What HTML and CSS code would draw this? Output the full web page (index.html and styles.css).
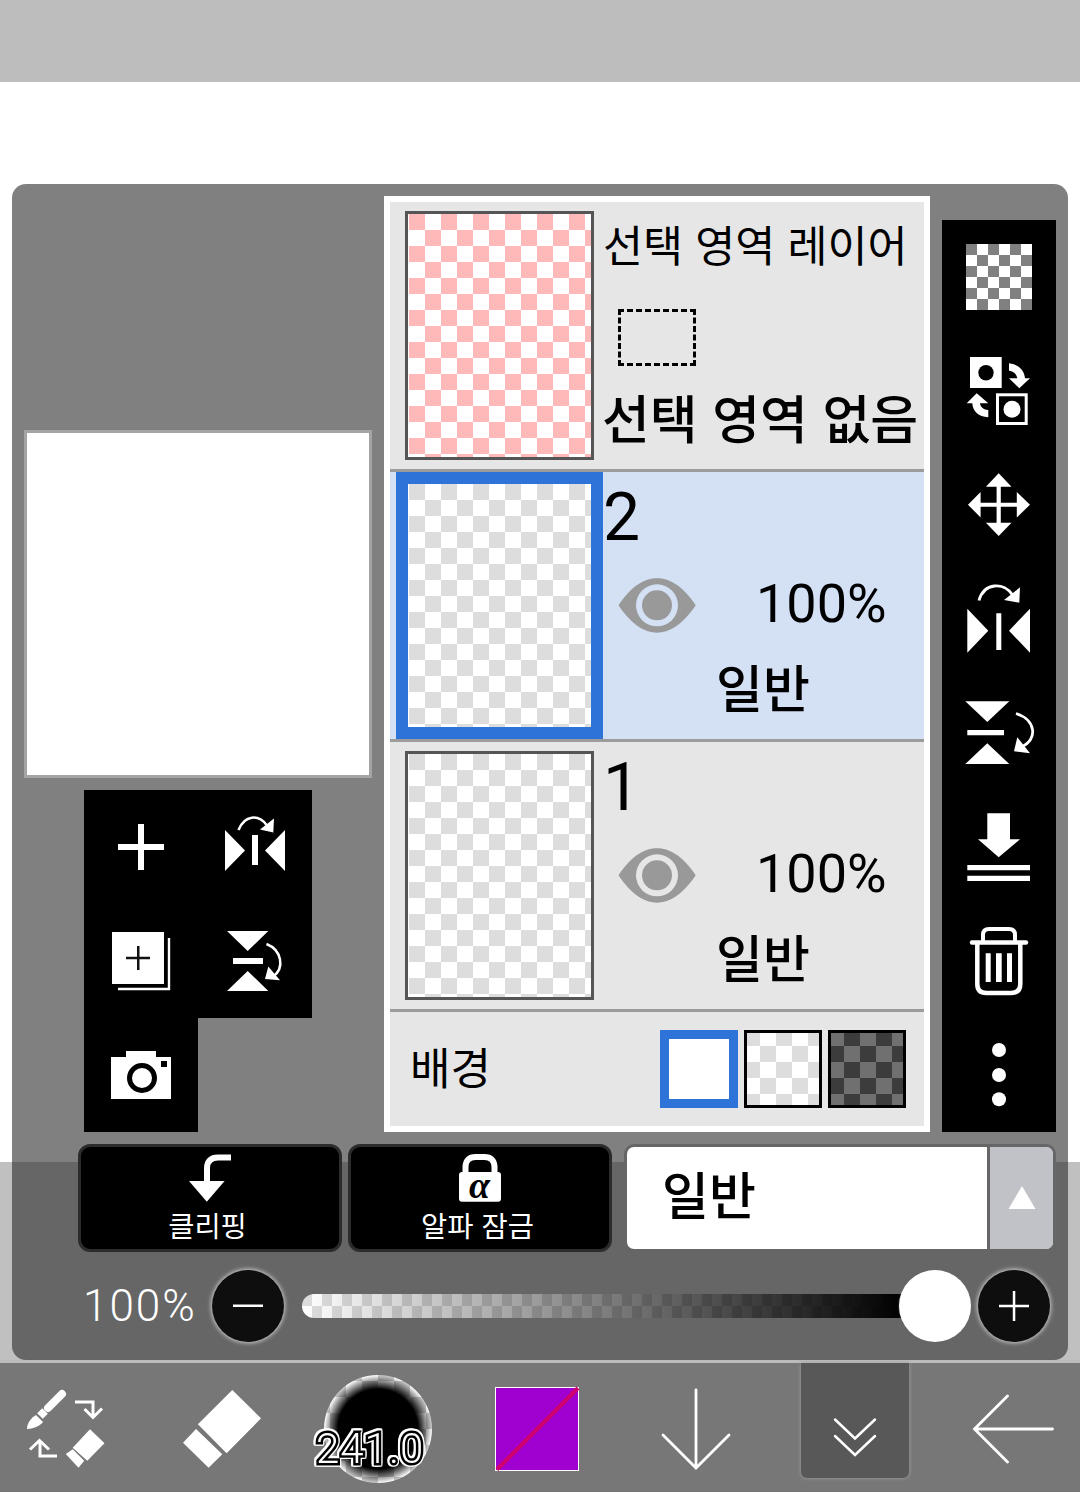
FILE: index.html
```html
<!DOCTYPE html>
<html lang="ko">
<head>
<meta charset="utf-8">
<title>레이어</title>
<link rel="stylesheet" href="styles.css">
</head>
<body>
<div class="page">
  <div class="statusbar"></div>
  <main class="stage">
    <section class="panel">
      <div class="workspace">
        <div class="left-col">
          <div class="preview"></div>
          <div class="toolbox">
            <div class="tool"><svg class="ic" viewBox="84 790 114 114"><path class="w" d="M138 824h6v20h20v6h-20v20h-6v-20h-20v-6h20z"/></svg></div>
            <div class="tool"><svg class="ic" viewBox="198 790 114 114"><path class="w" d="M225 830v41l20-20.500zM285 830v41l-20-20.500zM252 835h6v30h-6z"/><path class="s" stroke-width="2.500" d="M238.500 830c6-15 20-16 28-5"/><path class="w" d="M274 818.500l-.700 14-13.300-3z"/></svg></div>
            <div class="tool"><svg class="ic" viewBox="84 904 114 114"><path class="w" d="M112 932h52v52h-52z"/><path class="s" stroke-width="2.400" d="M118 989h51v-51"/><path fill="#111" d="M137 946h2.500v10.800H150v2.500h-10.500V970H137v-10.700h-11v-2.500h11z"/></svg></div>
            <div class="tool"><svg class="ic" viewBox="198 904 114 114"><path class="w" d="M227 931h41.300l-20.600 20zM227 991h41.300l-20.600-20zM233 958h30v6h-30z"/><path class="s" stroke-width="2.500" d="M266.500 944c15 6 19 24 6 33"/><path class="w" d="M268.300 966.500L265 979l15 1.200z"/></svg></div>
            <div class="tool"><svg class="ic" viewBox="84 1018 114 114"><path class="w" d="M126 1051h30v6h15v42h-60v-42h15z"/><circle cx="142" cy="1078" r="12.500" fill="#fff" stroke="#000" stroke-width="5"/><path fill="#000" d="M161 1061h6v6h-6z"/></svg></div>
          </div>
        </div>

        <div class="layers">
          <div class="layer">
            <div class="thumb thumb-pink"></div>
            <div class="layer-info">
              <div class="line title">선택 영역 레이어</div>
              <div class="line"><div class="dashed"></div></div>
              <div class="line line-last title-lg">선택 영역 없음</div>
            </div>
          </div>
          <div class="layer layer-active">
            <div class="thumb thumb-active"></div>
            <div class="layer-info info-active">
              <div class="line num">2</div>
              <div class="line">
                <svg class="eye" viewBox="618 578 78 55"><path class="eye-body" d="M618.500 605.300C632 585 645 578.300 657 578.300S682 585 695.700 605.300C682 625.500 669 632.700 657 632.700S632 625.500 618.500 605.300Z"/><circle class="eye-ring" cx="657" cy="605.300" r="21"/><circle class="eye-body" cx="657" cy="605.300" r="15"/></svg>
                <span class="pct">100%</span>
              </div>
              <div class="line line-last mode">일반</div>
            </div>
          </div>
          <div class="layer">
            <div class="thumb"></div>
            <div class="layer-info">
              <div class="line num num-one">1</div>
              <div class="line">
                <svg class="eye" viewBox="618 578 78 55"><path class="eye-body" d="M618.500 605.300C632 585 645 578.300 657 578.300S682 585 695.700 605.300C682 625.500 669 632.700 657 632.700S632 625.500 618.500 605.300Z"/><circle class="eye-ring eye-ring-plain" cx="657" cy="605.300" r="21"/><circle class="eye-body" cx="657" cy="605.300" r="15"/></svg>
                <span class="pct">100%</span>
              </div>
              <div class="line line-last mode">일반</div>
            </div>
          </div>
          <div class="bg-row">
            <span class="bg-label">배경</span>
            <div class="swatches">
              <div class="swatch swatch-white"></div>
              <div class="swatch swatch-light"></div>
              <div class="swatch swatch-dark"></div>
            </div>
          </div>
        </div>

        <div class="toolbar">
          <div class="tool"><div class="ic-checker"></div></div>
          <div class="tool"><svg class="ic" viewBox="942 334 114 114">
            <path class="w" d="M970 357h31.700v31H970z"/><circle cx="986" cy="372.700" r="7.700" fill="#000"/>
            <rect x="997.500" y="394.800" width="28.700" height="28.700" fill="none" stroke="#fff" stroke-width="3"/><circle class="w" cx="1012" cy="409.300" r="8.500"/>
            <path class="w" d="M1009 363.300c9 1 15.500 7 16 15h5l-10.700 10-10.300-10h8.300c-.5-4-4-7.500-8.300-7.600z"/>
            <path class="w" d="M988.300 417.300c-10-.5-15.500-6-16-14h-5.600l10-10 11.600 10h-8.300c.5 4 3.500 6.500 8.300 6.700z"/>
          </svg></div>
          <div class="tool"><svg class="ic" viewBox="942 448 114 114"><path class="w" d="M998.700 473.300l12.800 13.400h-10.700v16h16v-10.700l13.200 12.700-13.200 12.800v-10.800h-16v16h10.700L998.700 536l-12.800-13.300h10.700v-16h-16v10.800L968 504.700l12.600-12.700v10.700h16v-16h-10.700z"/></svg></div>
          <div class="tool"><svg class="ic" viewBox="942 562 114 114"><path class="w" d="M967.300 608.700v44l21-22zM1030 608.700v44l-21-22zM996.300 613.300h5v36.700h-5z"/><path class="s" stroke-width="2.800" d="M979 600.500c5-18 25-19 34-5"/><path class="w" d="M1020 587.300l-.7 15.400-15.300-2.700z"/></svg></div>
          <div class="tool"><svg class="ic" viewBox="942 676 114 114"><path class="w" d="M965.300 701.300h44l-22 20.700zM965.300 764h44l-22-20.700zM967.300 730H1004v5.300h-36.700z"/><path class="s" stroke-width="2.800" d="M1016 713.500c20 6 22 26 6 33"/><path class="w" d="M1017.300 737.300l-3.300 14 16 2z"/></svg></div>
          <div class="tool"><svg class="ic" viewBox="942 790 114 114"><path class="w" d="M987.300 813.300H1010v26h10l-21.300 18-20.700-18h9.300zM967.300 865H1030v5.300h-62.700zM967.300 875.700H1030v5.300h-62.700z"/></svg></div>
          <div class="tool"><svg class="ic" viewBox="942 904 114 114">
            <path class="s" stroke-width="4.500" d="M977.300 943v41c0 6 3 9 9 9h25c6 0 9-3 9-9v-41"/>
            <path class="s" stroke-width="4.500" stroke-linecap="round" d="M972 942.500h54"/>
            <path class="s" stroke-width="4" d="M983 942v-7c0-4 2-6 6-6h20c4 0 6 2 6 6v7"/>
            <path class="w" d="M985.700 953.300h5V982h-5zM996 953.300h5.700V982H996zM1007 953.300h5V982h-5z"/>
          </svg></div>
          <div class="tool"><svg class="ic" viewBox="942 1018 114 114"><circle class="w" cx="999" cy="1050" r="7"/><circle class="w" cx="999" cy="1075" r="7"/><circle class="w" cx="999" cy="1099.300" r="7"/></svg></div>
        </div>
      </div>

      <div class="controls">
        <button class="action">
          <svg class="action-icon" viewBox="0 1150 264 56"><path class="s" stroke-width="6" transform="translate(-78 0)" d="M207 1182v-14c0-7 4-10.500 11-10.500h13"/><path class="w" transform="translate(-78 0)" d="M189 1181h35.600l-17.800 20.700z"/></svg>
          <span class="action-label">클리핑</span>
        </button>
        <button class="action">
          <svg class="action-icon" viewBox="0 1150 264 56"><g transform="translate(-348 0)"><path class="s" stroke-width="6" d="M465.500 1175v-8c0-7 4-10 10-10h9c6 0 10 3 10 10v8"/><rect class="w" x="459" y="1172" width="42" height="29.700" rx="3"/><text class="alpha" x="479.500" y="1198">α</text></g></svg>
          <span class="action-label">알파 잠금</span>
        </button>
        <div class="select">
          <div class="select-value">일반</div>
          <div class="select-btn"><svg class="select-arrow" viewBox="0 0 28 24"><path class="w" d="M14 0L27.500 23H.5z"/></svg></div>
        </div>
      </div>

      <div class="slider-row">
        <span class="slider-label">100%</span>
        <div class="round"><svg class="round-ic" viewBox="0 0 72 72"><path class="w" d="M21 34.500h30v2.500H21z"/></svg></div>
        <div class="track"><div class="knob"></div></div>
        <div class="round"><svg class="round-ic" viewBox="0 0 72 72"><path class="w" d="M34.800 21h2.500v13.800H51v2.500H37.300V51h-2.500V37.300H21v-2.500h13.800z"/></svg></div>
      </div>
    </section>
  </main>

  <nav class="dock">
    <svg class="dock-ic" viewBox="0 1363 144 129">
      <path class="s" stroke-width="8" stroke-linecap="round" d="M62 1394l-14 14"/>
      <path class="s" stroke-width="8" d="M45 1411l-5 5"/>
      <path class="w" d="M36 1415l7 7c-3 4-10 7-16 7 0-6 4-11 9-14z"/>
      <path class="s" stroke-width="3" d="M75 1402h18v15M84.500 1409l8.500 8.500 9-9"/>
      <path class="s" stroke-width="3" d="M57 1456H40v-15M30 1449.500l9.500-9 9.500 9"/>
      <path class="w" d="M90 1429.300l14.500 14-17.200 17.400-14.600-13zM65.800 1454l6.900-4.700 11.500 11.400-5.700 7z"/>
    </svg>
    <svg class="dock-ic" viewBox="144 1363 156 129"><path class="w" d="M232.300 1390L261 1418.300l-34.400 35-28.700-29zM196 1429l26.300 25.300-13.700 13.400L183 1442.700z"/></svg>
    <div class="dock-cell">
      <div class="brush"><span class="brush-size">241.0</span></div>
    </div>
    <svg class="dock-ic" viewBox="458 1363 159 129"><rect x="495.500" y="1387.500" width="83" height="83" fill="#a000d0" stroke="#fff"/><path stroke="#d0006c" stroke-width="4" d="M497 1469.500l81-81.500"/></svg>
    <svg class="dock-ic" viewBox="617 1363 159 129"><path class="s" stroke-width="2.800" stroke-linecap="round" d="M696 1390v77M663 1435l33 33 33-33"/></svg>
    <div class="dock-cell dock-cell-tab">
      <div class="tab"><svg class="tab-ic" viewBox="776 1363 108 115"><path class="s" stroke-width="2.500" stroke-linecap="round" d="M810 1419.500l20 19 20-19M810 1436l20 19 20-19"/></svg></div>
    </div>
    <svg class="dock-ic" viewBox="934 1363 146 129"><path class="s" stroke-width="2.800" stroke-linecap="round" d="M1052.500 1429H975M1007.500 1396l-33 33 33 33"/></svg>
  </nav>
</div>
</body>
</html>
```
FILE: styles.css
```css
* { box-sizing: border-box; }
html, body { margin: 0; padding: 0; }
body {
  background: #fff;
  font-family: "Noto Sans CJK KR", "Noto Sans", sans-serif;
  color: #000;
}
.page { width: 1080px; height: 1492px; overflow: hidden; display: flex; flex-direction: column; }
.statusbar { height: 82px; background: #bdbdbd; flex: none; }
.stage {
  height: 1278px;
  flex: none;
  padding: 102px 12px 0;
  background: linear-gradient(#fff 1080px, #c0c0c0 1080px);
}
.panel {
  height: 1176px;
  border-radius: 14px;
  padding: 12px 0 18px;
  background: linear-gradient(#808080 978px, #666 978px);
}
.workspace { display: flex; height: 936px; }
.left-col {
  width: 372px;
  padding-left: 12px;
  display: flex;
  flex-direction: column;
  justify-content: flex-end;
  gap: 12px;
}
.preview { width: 348px; height: 348px; background: #fff; border: 3px solid #a4a4a4; }
.toolbox { margin-left: 60px; width: 228px; display: grid; grid-template-columns: 114px 114px; grid-auto-rows: 114px; }
.tool { background: #000; width: 114px; height: 114px; display: flex; align-items: center; justify-content: center; }
.ic { width: 114px; height: 114px; display: block; }
.w { fill: #fff; }
.s { fill: none; stroke: #fff; }
.ic-checker {
  width: 66px; height: 66px;
  background: conic-gradient(#fff 25%, #808080 0 50%, #fff 0 75%, #808080 0) 0 0 / 22px 22px;
}

.layers { width: 546px; height: 936px; border: 6px solid #fff; background: #e6e6e6; margin-left: 0; margin-right: 12px; flex: none; }
.layer { height: 270px; border-bottom: 3px solid #9c9c9c; display: flex; }
.thumb {
  width: 189px; height: 249px;
  margin: 9px 0 0 15px;
  border: 3px solid #555;
  padding: 0 0 0 1px;
  flex: none;
  background: conic-gradient(#fff 25%, #ddd 0 50%, #fff 0 75%, #ddd 0) 0 0 / 32px 32px content-box, #fff;
}
.thumb-pink { background: conic-gradient(#fff 25%, #ffb9b9 0 50%, #fff 0 75%, #ffb9b9 0) 0 0 / 32px 32px content-box, #fff; }
.thumb-active {
  width: 207px; height: 267px;
  margin: 0 0 0 6px;
  border: 12px solid #2e74d8;
}
.layer-active { background: #d4e1f5; }
.layer-info {
  flex: 1;
  padding-left: 10px;
  display: grid;
  grid-template-rows: 89px 89px 89px;
}
.info-active { padding-left: 1px; }
.line { display: flex; align-items: center; white-space: nowrap; }
.line-last { padding-bottom: 16px; }
.title { font-size: 43.500px; line-height: 1; padding-bottom: 5px; margin-left: -1px; }
.title-lg { font-size: 52px; font-weight: 500; line-height: 1; margin-left: -2px; }
.dashed { width: 78px; height: 57px; margin: 3px 0 0 14px; border: 3px dashed #000; }
.num { font-family: Roboto, sans-serif; font-size: 66px; line-height: 1; padding-top: 3px; margin-left: -1px; }
.eye { width: 78px; height: 55px; margin-left: 14px; flex: none; display: block; }
.eye-body { fill: #999; }
.eye-ring { fill: #d4e1f5; }
.eye-ring-plain { fill: #e6e6e6; }
.pct { font-family: Roboto, sans-serif; font-size: 54px; line-height: 1; margin-left: 60px; padding-bottom: 3px; }
.mode { font-size: 51px; font-weight: 500; line-height: 1; padding-left: 112px; }
.bg-row { height: 114px; display: flex; align-items: center; justify-content: space-between; padding: 0 18px 0 20px; }
.bg-label { font-size: 44px; line-height: 1; margin-bottom: 6px; }
.swatches { display: flex; gap: 6px; }
.swatch { width: 78px; height: 78px; border: 3px solid #000; }
.swatch-white { border: 9px solid #2e74d8; background: #fff; }
.swatch-light { background: conic-gradient(#fff 25%, #ddd 0 50%, #fff 0 75%, #ddd 0) -3px -3px / 32px 32px; }
.swatch-dark { background: conic-gradient(#3c3c3c 25%, #707070 0 50%, #3c3c3c 0 75%, #707070 0) -3px -3px / 32px 32px; }

.toolbar { width: 114px; height: 912px; margin-top: 24px; flex: none; display: flex; flex-direction: column; }

.controls { display: flex; margin: 12px 0 0 66px; height: 108px; }
.action {
  width: 264px; height: 108px;
  margin-right: 6px;
  padding: 0;
  background: #000;
  border: 3px solid #2c2c2c;
  border-radius: 12px;
  color: #fff;
  font: 400 28.500px/1 "Noto Sans CJK KR", sans-serif;
  display: flex;
  flex-direction: column;
  align-items: center;
}
.action-label { margin: 5px 5px 0 0; }
.action-icon { width: 264px; height: 56px; margin-top: 3px; display: block; flex: none; }
.alpha { font: italic 700 38px "Liberation Serif", serif; fill: #000; text-anchor: middle; }
.select {
  width: 432px; height: 108px;
  margin-left: 6px;
  display: flex;
  border: 3px solid #666;
  border-radius: 10px;
  overflow: hidden;
  background: #fff;
}
.select-value { flex: 1; font-size: 51px; font-weight: 500; line-height: 92px; padding-left: 35px; }
.select-btn { width: 66px; border-left: 3px solid #666; background: #c0c2c8; display: flex; align-items: center; justify-content: center; }
.select-arrow { width: 28px; height: 24px; display: block; }

.slider-row { display: flex; align-items: center; height: 72px; margin: 18px 0 0 71px; }
.slider-label { width: 129px; font: 300 44px/1 Roboto, sans-serif; color: #fff; letter-spacing: 2px; }
.round { width: 72px; height: 72px; border-radius: 50%; background: #0e0e0e; box-shadow: 0 0 4px 1px #ccc; flex: none; }
.round-ic { width: 72px; height: 72px; display: block; }
.track {
  position: relative;
  width: 638px; height: 24px;
  margin: 0 38px 0 18px;
  border-radius: 12px;
  background:
    linear-gradient(90deg, rgba(0,0,0,0) 0, #000 94%),
    conic-gradient(#fff 25%, #dedede 0 50%, #fff 0 75%, #dedede 0) 0 0 / 20px 24px;
}
.knob {
  position: absolute;
  left: 597px; top: -24px;
  width: 72px; height: 72px;
  border-radius: 50%;
  background: #fff;
  box-shadow: 0 0 2px #666;
}

.dock {
  height: 132px;
  flex: none;
  background: #777;
  border-top: 3px solid #bbb;
  display: grid;
  grid-template-columns: 144px 156px 158px 159px 159px 158px 146px;
}
.dock-ic { width: 100%; height: 129px; display: block; }
.dock-cell { display: flex; justify-content: center; padding: 12px 2px 0 0; }
.dock-cell-tab { padding: 0; }
.brush {
  position: relative;
  width: 108px; height: 108px;
  border-radius: 50%;
  background:
    radial-gradient(closest-side, #000 74%, rgba(0,0,0,0) 100%),
    conic-gradient(#fff 25%, #ccc 0 50%, #fff 0 75%, #ccc 0) 6px 6px / 32px 32px;
}
.brush-size {
  position: absolute;
  left: -8px; top: 53px;
  font: 300 42px/1 Roboto, sans-serif;
  letter-spacing: 1px;
  color: #fff;
  -webkit-text-stroke: 5px #000;
  paint-order: stroke fill;
  filter: drop-shadow(1.200px 0 0 #fff) drop-shadow(-1.200px 0 0 #fff) drop-shadow(0 1.200px 0 #fff) drop-shadow(0 -1.200px 0 #fff);
}
.tab { width: 108px; height: 115px; border-radius: 0 0 6px 6px; background: #585858; box-shadow: 0 0 4px #a0a0a0; }
.tab-ic { width: 108px; height: 115px; display: block; }
```
